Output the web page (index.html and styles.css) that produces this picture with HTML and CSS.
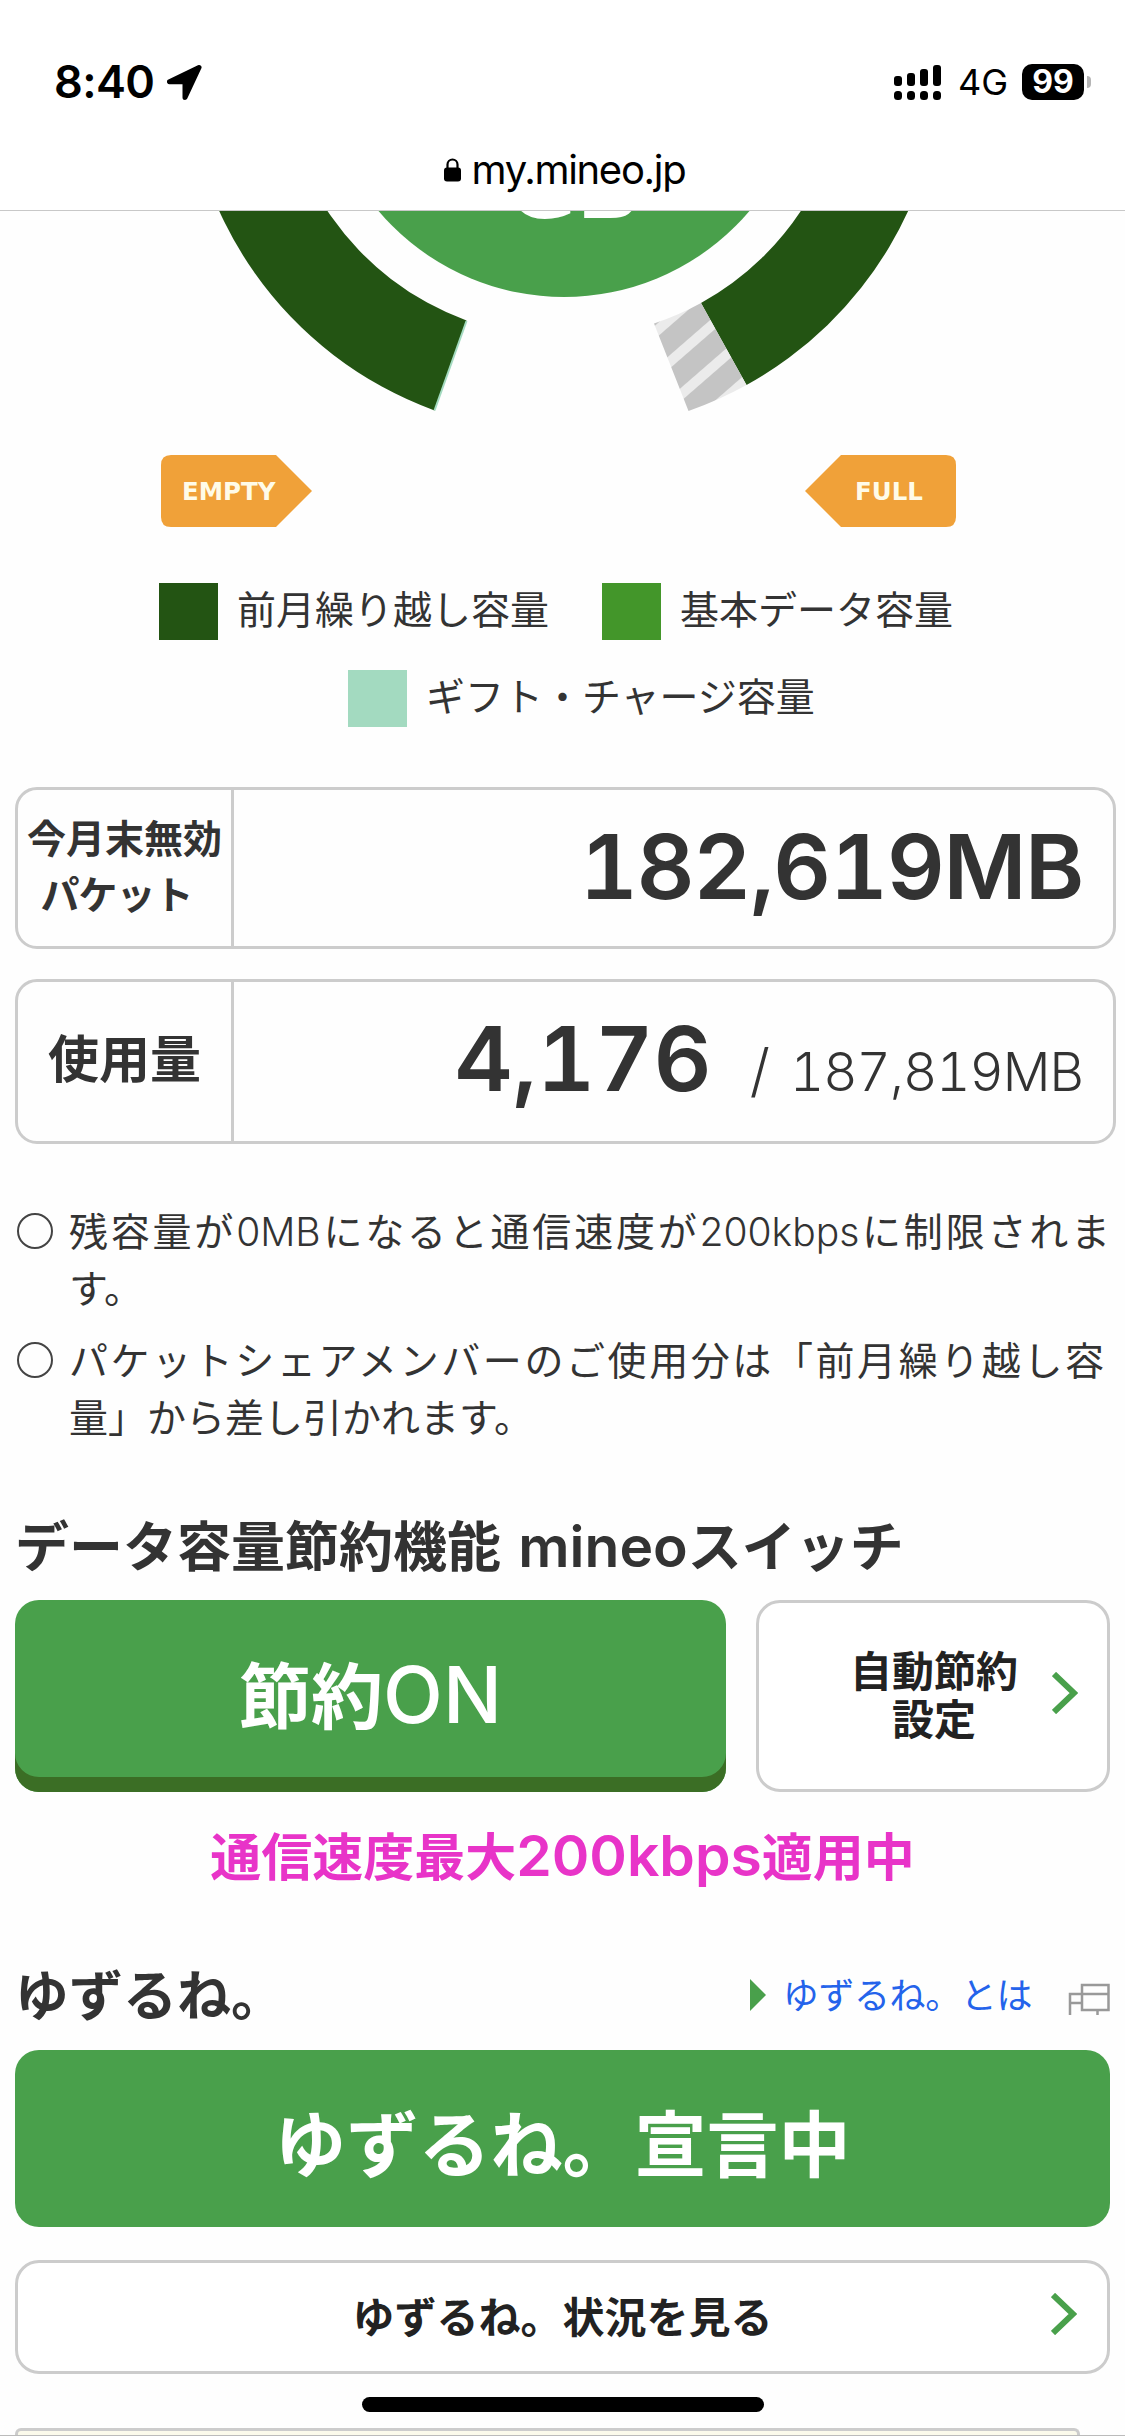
FILE: index.html
```html
<!DOCTYPE html>
<html lang="ja">
<head>
<meta charset="utf-8">
<title>my.mineo.jp</title>
<link rel="stylesheet" href="styles.css">
</head>
<body>
<header class="browser-bar">
  <div class="status">
    <div class="status-left">
      <span class="clock">8:40</span>
      <svg class="location" viewBox="0 0 35 35" width="35" height="35"><path d="M32 2.500 2.500 16.800H18V32.500Z"/></svg>
    </div>
    <div class="status-right">
      <svg class="signal" viewBox="0 0 47 35" width="47" height="35"><rect x="0" y="11" width="8" height="10" rx="3"/><rect x="13" y="8" width="8" height="13" rx="3"/><rect x="26" y="4" width="8" height="17" rx="3"/><rect x="39" y="0" width="8" height="21" rx="3"/><rect x="0" y="26" width="8" height="9" rx="3.500"/><rect x="13" y="26" width="8" height="9" rx="3.500"/><rect x="26" y="26" width="8" height="9" rx="3.500"/><rect x="39" y="26" width="8" height="9" rx="3.500"/></svg>
      <span class="network">4G</span>
      <span class="battery">99</span>
      <span class="battery-tip"></span>
    </div>
  </div>
  <div class="address">
    <svg viewBox="0 0 17 24" width="17" height="24"><rect x="0" y="9.500" width="17" height="14" rx="3"/><path d="M3.500 11V6.500a5 5 0 0 1 10 0V11" fill="none" stroke="#000" stroke-width="2.200"/></svg>
    <span class="host">my.mineo.jp</span>
  </div>
</header>
<main class="page">
  <section class="gauge">
    <svg class="dial" viewBox="0 211 1125 209" width="1125" height="209">
      <defs>
        <pattern id="stripes" width="32" height="32" patternUnits="userSpaceOnUse" patternTransform="translate(670 361.600) rotate(-41)"><rect width="32" height="32" fill="#c4c4c4"/><rect width="32" height="5" fill="#ebebeb"/><rect y="27" width="32" height="5" fill="#ebebeb"/></pattern>
      </defs>
      <circle cx="564" cy="54" r="243" fill="#49a04b"/>
      <text class="dial-unit" x="574" y="218" text-anchor="middle">GB</text>
      <path d="M185.500 54A378.500 378.500 0 0 0 434.500 410.500L466.500 320.500A284 284 0 0 1 280 54Z" fill="#235413"/>
      <path d="M434.500 410.500 466.500 321" stroke="#a3dac0" stroke-width="2"/>
      <path d="M942.500 54A378.500 378.500 0 0 1 746.500 385L701 303A284 284 0 0 0 848 54Z" fill="#235413"/>
      <path d="M746.500 385A378.500 378.500 0 0 1 688.500 411L654 323.500A284 284 0 0 0 701 303Z" fill="url(#stripes)"/>
    </svg>
    <div class="flags">
      <div class="flag empty"><svg viewBox="0 0 151 72" width="151" height="72"><path d="M10 0H115L151 36 115 72H10Q0 72 0 62V10Q0 0 10 0Z"/></svg><span>EMPTY</span></div>
      <div class="flag full"><svg viewBox="0 0 151 72" width="151" height="72"><path d="M141 0H36L0 36 36 72H141Q151 72 151 62V10Q151 0 141 0Z"/></svg><span>FULL</span></div>
    </div>
    <ul class="legend">
      <li><i class="swatch carry"></i><span>前月繰り越し容量</span></li>
      <li><i class="swatch base"></i><span>基本データ容量</span></li>
      <li class="gift-item"><i class="swatch gift"></i><span>ギフト・チャージ容量</span></li>
    </ul>
  </section>

  <section class="meters">
    <div class="meter first">
      <div class="meter-label small"><span>今月末無効</span><span class="packet">パケット</span></div>
      <div class="meter-value"><strong class="total">182,619MB</strong></div>
    </div>
    <div class="meter second">
      <div class="meter-label">使用量</div>
      <div class="meter-value"><strong class="used">4,176</strong><span class="slash">/</span><span class="limit">187,819MB</span></div>
    </div>
  </section>

  <ul class="notes">
    <li><span class="ring"></span><p><span class="line just">残容量が<span class="latin">0MB</span>になると通信速度が<span class="latin">200kbps</span>に制限されま</span><span class="line">す。</span></p></li>
    <li><span class="ring"></span><p><span class="line just member">パケットシェアメンバーのご使用分は「前月繰り越し容</span><span class="line">量」から差し引かれます。</span></p></li>
  </ul>

  <h2 class="heading saver">データ容量節約機能 <span class="latin">mineo</span>スイッチ</h2>
  <div class="saver-row">
    <button class="btn-saver">節約<span class="latin">ON</span></button>
    <button class="btn-auto"><span>自動節約<br>設定</span><svg class="chevron" viewBox="0 0 26 42" width="26" height="42"><path d="M2 2 22 21 2 40"/></svg></button>
  </div>
  <p class="notice">通信速度最大<span class="latin">200kbps</span>適用中</p>

  <div class="heading-row">
    <h2 class="heading">ゆずるね。</h2>
    <a class="about"><svg class="marker" viewBox="0 0 16 32" width="16" height="32"><path d="M0 0 16 16 0 32Z" fill="#49a04b"/></svg><span>ゆずるね。とは</span><svg class="window-icon" viewBox="0 0 42 32" width="42" height="32"><path d="M14 2H40.500V27H14ZM14 11H40.500M14 11H2V32M2 20H14M29.500 27V32"/></svg></a>
  </div>
  <button class="btn-declare">ゆずるね。宣言中</button>
  <button class="btn-status"><span>ゆずるね。状況を見る</span><svg class="chevron" viewBox="0 0 26 42" width="26" height="42"><path d="M2 2 22 21 2 40"/></svg></button>
  <div class="next-card"></div>
  <div class="toolbar-edge"></div>
</main>
<div class="home-bar"></div>
</body>
</html>
```

FILE: styles.css
```css
* { box-sizing: border-box; }
body {
  margin: 0;
  width: 1125px;
  height: 2436px;
  overflow: hidden;
  position: relative;
  background: #fefefe;
  color: #333;
  font-family: "Noto Sans CJK JP", sans-serif;
}
p, h2, ul { margin: 0; padding: 0; }
ul { list-style: none; }
button { font-family: inherit; margin: 0; padding: 0; border: 0; }
svg { display: block; flex: none; }
.latin { font-family: Inter, sans-serif; line-height: 1; }

.browser-bar {
  height: 211px;
  background: #fff;
  border-bottom: 1px solid #c8c8c8;
  color: #000;
  font-family: Inter, sans-serif;
}
.status {
  height: 140px;
  padding: 24px 34px 0 54px;
  display: flex;
  justify-content: space-between;
  align-items: center;
}
.status-left, .status-right { display: flex; align-items: center; }
.clock { font-size: 45px; font-weight: 600; line-height: 56px; letter-spacing: -0.6px; }
.location { margin-left: 13px; }
.location path { fill: #000; stroke: #000; stroke-width: 5; stroke-linejoin: round; }
.network { margin-left: 17px; font-size: 36px; line-height: 36px; }
.battery {
  width: 62px;
  height: 36px;
  margin-left: 14px;
  border-radius: 10px;
  background: #000;
  color: #fff;
  font-size: 32px;
  font-weight: 700;
  line-height: 36px;
  text-align: center;
}
.battery-tip { width: 4px; height: 12px; margin-left: 3px; border-radius: 0 4px 4px 0; background: #b5b5b5; }
.address { display: flex; justify-content: center; align-items: center; gap: 11px; height: 60px; padding-left: 4px; }
.host { font-size: 40px; line-height: 60px; letter-spacing: -1.3px; }

.page { padding: 0 15px; }
.gauge { margin: 0 -15px; }
.dial-unit { font: 700 84px "DejaVu Sans", sans-serif; fill: #fff; }
.flags { display: flex; justify-content: space-between; padding: 35px 169px 0 161px; }
.flag { display: grid; height: 72px; width: 151px; }
.flag > * { grid-area: 1 / 1; }
.flag path { fill: #f0a139; }
.flag span { color: #fffbe8; font: 700 24.5px/74px "DejaVu Sans", sans-serif; padding-left: 21px; }
.flag.full span { padding-left: 50px; }
.legend { display: flex; flex-wrap: wrap; padding: 56px 150px 0 159px; gap: 30px 53px; }
.legend li { display: flex; align-items: center; height: 57px; font-size: 39px; }
.legend span { line-height: 57px; padding-bottom: 8px; }
.swatch { width: 59px; height: 57px; margin-right: 19px; }
.carry { background: #235413; }
.base { background: #43962a; }
.gift { background: #a3dac0; }
.gift-item { padding-left: 189px; }

.meters { padding-top: 60px; }
.meter { display: flex; width: 1101px; border: 3px solid #ccc; border-radius: 22px; }
.meter.first { height: 162px; }
.meter.second { height: 165px; margin-top: 30px; }
.meter-label {
  width: 216px;
  padding-bottom: 11px;
  border-right: 3px solid #ccc;
  display: flex;
  flex-direction: column;
  align-items: center;
  justify-content: center;
  font-size: 51px;
  font-weight: 700;
}
.meter-label.small { font-size: 39px; line-height: 56px; padding-bottom: 8px; }
.packet { margin-right: 16px; letter-spacing: -1px; }
.meter-value {
  flex: 1;
  display: flex;
  justify-content: flex-end;
  align-items: baseline;
  padding-right: 30px;
  white-space: nowrap;
  font-family: Inter, sans-serif;
  font-variant-numeric: tabular-nums;
}
.meter-value strong { font-size: 90px; line-height: 154px; font-weight: 600; }
.meter-value .total { letter-spacing: -1.4px; }
.slash { margin-left: 38px; font-size: 58px; font-weight: 300; }
.limit { margin-left: 20px; font-size: 53px; font-weight: 300; letter-spacing: -1px; }

.notes { padding-top: 57px; font-size: 39px; line-height: 57px; }
.notes li { display: flex; }
.notes li + li { margin-top: 15px; }
.notes .latin { font-weight: 350; }
.ring { width: 36px; height: 36px; margin: 12px 16px 0 2px; border: 2px solid #444; border-radius: 50%; flex: none; }
.line { display: block; white-space: nowrap; height: 57px; }
.just { width: 1041px; text-align-last: justify; text-align: justify; }
.member { width: 1035px; }

.heading { font-size: 54px; line-height: 80px; font-weight: 700; white-space: nowrap; }
.heading .latin { margin-left: 5px; font-size: 57px; font-weight: 600; }
.saver { margin-top: 60px; height: 80px; }
.saver-row { display: flex; gap: 30px; margin-top: 16px; }
.btn-saver {
  width: 711px;
  height: 192px;
  padding-bottom: 9px;
  border-radius: 24px;
  background: #49a04b;
  box-shadow: inset 0 -15px 0 #3b6e25;
  color: #fff;
  font-size: 72px;
  font-weight: 700;
}
.btn-saver .latin { font-size: 78px; font-weight: 500; }
.btn-auto {
  width: 354px;
  height: 192px;
  border: 3px solid #ccc;
  border-radius: 24px;
  background: #fff;
  color: #222;
  display: flex;
  align-items: center;
  justify-content: flex-end;
  padding: 0 29px 6px 0;
  font-size: 42px;
  line-height: 48px;
  font-weight: 700;
}
.chevron { margin-left: 34px; }
.chevron path { fill: none; stroke: #49a04b; stroke-width: 6; }
.notice { margin-top: 24px; height: 76px; text-align: center; color: #e834c8; font-size: 51px; font-weight: 700; line-height: 76px; }
.notice .latin { font-size: 57px; font-weight: 600; }

.heading-row { display: flex; justify-content: space-between; align-items: center; height: 80px; margin-top: 61px; }
.about { display: flex; align-items: center; color: #2463eb; font-size: 36px; }
.about span { margin-left: 17px; letter-spacing: -0.4px; }
.marker { margin-top: 4px; }
.window-icon { margin: 12px 0 0 36px; }
.window-icon path { fill: none; stroke: #999; stroke-width: 2.500; }
.btn-declare { display: block; width: 1095px; height: 177px; margin-top: 17px; padding-top: 2px; border-radius: 24px; background: #49a04b; color: #fff; font-size: 72px; font-weight: 700; }
.btn-status {
  width: 1095px;
  height: 114px;
  margin-top: 33px;
  border: 3px solid #ccc;
  border-radius: 24px;
  background: #fff;
  color: #222;
  display: grid;
  grid-template-columns: 56px 1fr 56px;
  align-items: center;
  font-size: 42px;
  font-weight: 700;
}
.btn-status span { grid-column: 2; padding-bottom: 6px; }
.btn-status .chevron { margin: 0 0 6px; }
.next-card { width: 1065px; height: 7px; margin-top: 54px; border: 3px solid #ccc; border-bottom: 0; border-radius: 6px 6px 0 0; background: #fbfaeb; }
.toolbar-edge { height: 1px; margin: 0 -15px; background: #bbb; }
.home-bar { position: absolute; left: 362px; top: 2397px; width: 402px; height: 15px; border-radius: 8px; background: #000; }
```
